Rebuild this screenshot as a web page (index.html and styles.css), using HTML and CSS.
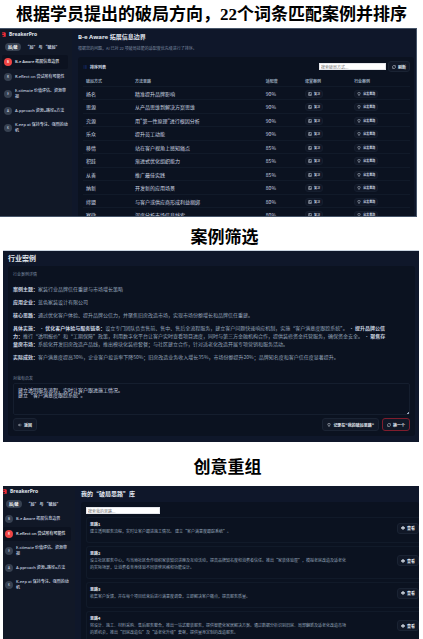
FILE: index.html
```html
<!DOCTYPE html>
<html lang="zh-CN">
<head>
    <meta charset="UTF-8">
    <meta name="viewport" content="width=device-width, initial-scale=1.0">
    <title>BreakerPro</title>
    <link rel="stylesheet" href="styles.css">
</head>
<body>
    <!-- Shared icons -->
    <svg class="sprite" aria-hidden="true">
        <symbol id="i-refresh" viewBox="0 0 24 24"><path d="M3 11a9 9 0 0 1 15-6l3 3M21 3v5h-5M21 13a9 9 0 0 1-15 6l-3-3M3 21v-5h5"/></symbol>
        <symbol id="i-book" viewBox="0 0 24 24"><path d="M4 3h16v18H4zM4 16h16M9 3v8"/></symbol>
        <symbol id="i-bulb" viewBox="0 0 24 24"><path d="M9 17c0-3-4-4-4-9a7 7 0 0 1 14 0c0 5-4 6-4 9zM9 22h6"/></symbol>
        <symbol id="i-back" viewBox="0 0 24 24"><path d="M21 12H4M11 4l-8 8 8 8"/></symbol>
        <symbol id="i-eye" viewBox="0 0 24 24"><path fill="currentColor" d="M1 12q11-17 22 0q-11 17-22 0z"/><circle cx="12" cy="12" r="3" fill="#111827" stroke="none"/></symbol>
        <symbol id="i-list" viewBox="0 0 24 24"><path d="M2 5h3M9 5h13M2 12h3M9 12h13M2 19h3M9 19h13"/></symbol>
        <symbol id="i-logo" viewBox="0 0 20 24"><path fill="#ef2b36" stroke="none" d="M1 1h14l4 4v18H3v-5h7v-3H1v-5h9V7H1z"/></symbol>
    </svg>

    <h1 class="heading">根据学员提出的破局方向，22个词条匹配案例并排序</h1>

    <div class="shot shot-rank">
        <nav class="sidebar">
            <div class="brand"><svg><use href="#i-logo"/></svg>BreakerPro</div>
            <div class="mode"><span class="pill">局/破</span><span>“局” 与 “破局”</span></div>
            <a class="item active" href="#"><span class="dot">B</span><span>B-e Aware 拓展信息边界</span></a>
            <a class="item" href="#"><span class="dot">R</span><span>R-eflect on 尝试所有可能性</span></a>
            <a class="item" href="#"><span class="dot">E</span><span>E-stimate 价值评估、资源审<br>视</span></a>
            <a class="item" href="#"><span class="dot">A</span><span>A-pproach 资源+路径=方法</span></a>
            <a class="item" href="#"><span class="dot">K</span><span>K-eep at 保持专注、强烈的动<br>机</span></a>
        </nav>
        <main class="main">
            <h2 class="title">B-e Aware 拓展信息边界</h2>
            <p class="desc">根据您的问题，AI 已对 22 项破局技能的适配度优先级进行了排序。</p>
            <div class="panel">
                <div class="toolbar">
                    <span class="list-name"><svg><use href="#i-list"/></svg>排序列表</span>
                    <input class="search" type="text" placeholder="搜索破局方式..." aria-label="搜索破局方式">
                    <button class="btn"><svg><use href="#i-refresh"/></svg>刷新</button>
                </div>
                <table class="rank">
                    <thead>
                        <tr><th>破局方式</th><th>方法思路</th><th>适配度</th><th>课堂案例</th><th>行业案例</th></tr>
                    </thead>
                    <tbody>
                        <tr><td>扬名</td><td>精准提升品牌影响</td><td>90%</td><td><button class="tag"><svg><use href="#i-book"/></svg>复习</button></td><td><button class="tag"><svg><use href="#i-bulb"/></svg>启发思路</button></td></tr>
                        <tr><td>思源</td><td>从产品思维到解决方案思维</td><td>90%</td><td><button class="tag"><svg><use href="#i-book"/></svg>复习</button></td><td><button class="tag"><svg><use href="#i-bulb"/></svg>启发思路</button></td></tr>
                        <tr><td>究源</td><td>用"第一性原理"进行根因分析</td><td>90%</td><td><button class="tag"><svg><use href="#i-book"/></svg>复习</button></td><td><button class="tag"><svg><use href="#i-bulb"/></svg>启发思路</button></td></tr>
                        <tr><td>乐众</td><td>提升员工动能</td><td>90%</td><td><button class="tag"><svg><use href="#i-book"/></svg>复习</button></td><td><button class="tag"><svg><use href="#i-bulb"/></svg>启发思路</button></td></tr>
                        <tr><td>移情</td><td>站在客户视角上感知痛点</td><td>85%</td><td><button class="tag"><svg><use href="#i-book"/></svg>复习</button></td><td><button class="tag"><svg><use href="#i-bulb"/></svg>启发思路</button></td></tr>
                        <tr><td>积跬</td><td>渐进式优化组织能力</td><td>85%</td><td><button class="tag"><svg><use href="#i-book"/></svg>复习</button></td><td><button class="tag"><svg><use href="#i-bulb"/></svg>启发思路</button></td></tr>
                        <tr><td>从善</td><td>推广最佳实践</td><td>85%</td><td><button class="tag"><svg><use href="#i-book"/></svg>复习</button></td><td><button class="tag"><svg><use href="#i-bulb"/></svg>启发思路</button></td></tr>
                        <tr><td>纳新</td><td>开发新的应用场景</td><td>80%</td><td><button class="tag"><svg><use href="#i-book"/></svg>复习</button></td><td><button class="tag"><svg><use href="#i-bulb"/></svg>启发思路</button></td></tr>
                        <tr><td>缔盟</td><td>与客户或供应商形成利益捆绑</td><td>80%</td><td><button class="tag"><svg><use href="#i-book"/></svg>复习</button></td><td><button class="tag"><svg><use href="#i-bulb"/></svg>启发思路</button></td></tr>
                        <tr><td>察微</td><td>深度分析市场信息线索</td><td>80%</td><td><button class="tag"><svg><use href="#i-book"/></svg>复习</button></td><td><button class="tag"><svg><use href="#i-bulb"/></svg>启发思路</button></td></tr>
                    </tbody>
                </table>
            </div>
        </main>
    </div>

    <h1 class="heading heading-case">案例筛选</h1>

    <div class="shot shot-case">
        <h2 class="case-title">行业案例</h2>
        <div class="case-panel">
            <p class="label">行业案例详情</p>
            <div class="case-text">
                <p><b>案例主题：</b>家装行业品牌信任重建与市场增长策略</p>
                <p><b>应用企业：</b>蓝色家装设计有限公司</p>
                <p><b>核心思路：</b>通过优化客户体验、提升品牌公信力，并聚焦旧房改造市场，实现市场份额增长和品牌信任重建。</p>
                <p><b>具体实施：</b> · <b>优化客户体验与服务链条：</b>设立专门团队负责售前、售中、售后全流程服务，建立客户问题快速响应机制，实施“客户满意度跟踪系统”。 · <b>提升品牌公信<br>力：</b>推行“透明报价”和“工期保障”政策，利用数字化平台让客户实时查看项目进度，同时与第三方金融机构合作，提供装修资金托管服务，确保资金安全。 · <b>聚焦存<br>量房市场：</b>系统化开发旧房改造产品线，推出模块化装修套餐；与社区建立合作，针对适老化改造开展专项营销和服务活动。</p>
                <p><b>实际成效：</b>客户满意度提高30%，企业客户投诉率下降50%；旧房改造业务收入增长35%，市场份额提升20%；品牌知名度和客户信任度显著提升。</p>
            </div>
            <label class="label" for="note">对我有启发</label>
            <textarea class="note" id="note">建立透明服务流程，实时让客户跟进施工情况。
建立“客户满意度跟踪系统”。</textarea>
            <div class="actions">
                <button class="btn btn-large btn-back"><svg><use href="#i-back"/></svg>返回</button>
                <button class="btn btn-large"><svg><use href="#i-bulb"/></svg>记录在"我的破局思路"</button>
                <button class="btn btn-large btn-red"><svg><use href="#i-refresh"/></svg>换一个</button>
            </div>
        </div>
    </div>

    <h1 class="heading heading-idea">创意重组</h1>

    <div class="shot shot-idea">
        <nav class="sidebar">
            <div class="brand"><svg><use href="#i-logo"/></svg>BreakerPro</div>
            <div class="mode"><span class="pill">局/破</span><span>“局” 与 “破局”</span></div>
            <a class="item" href="#"><span class="dot">B</span><span>B-e Aware 拓展信息边界</span></a>
            <a class="item active" href="#"><span class="dot">R</span><span>R-eflect on 尝试所有可能性</span></a>
            <a class="item" href="#"><span class="dot">E</span><span>E-stimate 价值评估、资源审<br>视</span></a>
            <a class="item" href="#"><span class="dot">A</span><span>A-pproach 资源+路径=方法</span></a>
            <a class="item" href="#"><span class="dot">K</span><span>K-eep at 保持专注、强烈的动<br>机</span></a>
        </nav>
        <div class="main">
            <h2 class="title">我的“破局思路”库</h2>
            <div class="panel">
                <input class="search" type="text" placeholder="搜索我的思路..." aria-label="搜索我的思路">
                <div class="card">
                    <div class="card-text">
                        <h3>思路1</h3>
                        <p>建立透明服务流程，实时让客户跟进施工情况。 建立“客户满意度跟踪系统”。</p>
                    </div>
                    <button class="btn"><svg><use href="#i-eye"/></svg>查看</button>
                </div>
                <div class="card">
                    <div class="card-text">
                        <h3>思路2</h3>
                        <p>设立社区服务中心，与当地社区合作组织家装知识讲座及互动活动，提高品牌知名度和消费者信任。推出“家装体验屋”，模拟老房改造及适老化<br>的实际场景，让消费者亲身体验不同装修风格和功能设计。</p>
                    </div>
                    <button class="btn"><svg><use href="#i-eye"/></svg>查看</button>
                </div>
                <div class="card">
                    <div class="card-text">
                        <h3>思路3</h3>
                        <p>收集客户反馈，并在每个项目结束后进行满意度调查，立即解决客户痛点，提高服务质量。</p>
                    </div>
                    <button class="btn"><svg><use href="#i-eye"/></svg>查看</button>
                </div>
                <div class="card">
                    <div class="card-text">
                        <h3>思路4</h3>
                        <p>将设计、施工、材料采购、售后服务整合，推出一站式整装服务，提供智能化家居解决方案。通过数据分析识别旧房、局部翻新及适老化改造市场<br>的新机会，推出“旧房改造包”及“适老化升级”套餐，提供量身定制的改造服务。</p>
                    </div>
                    <button class="btn"><svg><use href="#i-eye"/></svg>查看</button>
                </div>
            </div>
        </div>
    </div>
</body>
</html>
```
FILE: styles.css
```css
* {
    box-sizing: border-box;
}

body {
    margin: 0;
    height: 100vh;
    display: flex;
    flex-direction: column;
    overflow: hidden;
    background: #fff;
    color: #cbd5e1;
    font-family: "Noto Sans CJK SC", "Noto Sans", sans-serif;
    font-size: 4px;
    line-height: 6px;
}

h1, h2, h3, p {
    margin: 0;
}

button, input, textarea {
    font-family: inherit;
    font-size: 4px;
    line-height: 6px;
}

svg {
    width: 4px;
    height: 4px;
    flex: none;
    fill: none;
    stroke: currentColor;
    stroke-width: 3;
}

.sprite {
    display: none;
}

/* Section headings */
.heading {
    flex: none;
    color: #000;
    text-align: center;
    font-family: "Liberation Serif", "Noto Sans CJK SC", serif;
    font-size: 17px;
    line-height: 26px;
    font-weight: 700;
    padding-top: 2px;
}

.heading-case {
    line-height: 24px;
    padding: 9px 0 0 26px;
}

.heading-idea {
    line-height: 36px;
    padding: 8px 0 0 32px;
}

.shot {
    flex: none;
    display: flex;
    overflow: hidden;
    background: #0f172a;
}

.shot-rank {
    margin-right: 6px;
    aspect-ratio: 417 / 189;
    border: 1px solid #475569;
    border-left: 0;
}

.shot-case {
    margin: 0 4px 0 3px;
    flex-direction: column;
    padding: 2px 4px 6px 5px;
    border-top: 1px solid #cbd5e1;
}

.shot-idea {
    margin: 0 4px 0 3px;
    flex: 1;
}

/* Sidebar */
.sidebar {
    flex: none;
    width: 72px;
    display: flex;
    flex-direction: column;
    gap: 1px;
    padding: 1px 4px 0 2px;
    background: #111827;
}

.brand {
    display: flex;
    align-items: center;
    gap: 3px;
    font-family: "Noto Sans", sans-serif;
    font-size: 5px;
    line-height: 8px;
    font-weight: 700;
    color: #e2e8f0;
}

.brand svg {
    height: 5px;
}

.mode {
    display: flex;
    align-items: center;
    gap: 5px;
    margin: 4px 0 3px;
    padding-left: 3px;
    font-weight: 600;
}

.pill {
    padding: 1px 3px;
    border-radius: 4px;
    background: #374151;
    color: #fff;
}

.item {
    display: flex;
    align-items: center;
    gap: 3px;
    min-height: 14px;
    padding: 3px 2px;
    border-radius: 2px;
    color: #cbd5e1;
    font-family: "Noto Sans", "Noto Sans CJK SC", sans-serif;
    font-weight: 500;
    text-decoration: none;
    white-space: nowrap;
}

.item.active {
    background: #0c1220;
    color: #e2e8f0;
}

.dot {
    flex: none;
    width: 8px;
    height: 8px;
    border-radius: 50%;
    background: #374151;
    font-size: 3px;
    line-height: 8px;
    text-align: center;
}

.active .dot {
    background: #ef4444;
    color: #fff;
}

.shot-idea .sidebar {
    padding-left: 0;
}

/* Main column */
.main {
    flex: 1;
    min-width: 0;
    display: flex;
    flex-direction: column;
    padding: 4px 2px 0 6px;
}

.title {
    font-family: "Noto Sans", "Noto Sans CJK SC", sans-serif;
    font-size: 6px;
    line-height: 8px;
    font-weight: 700;
    color: #e2e8f0;
}

.desc {
    margin-top: 4px;
    color: #7c8aa0;
}

.panel {
    flex: 1;
    margin-top: 6px;
    padding: 4px 4px 0 5px;
    border-radius: 3px 3px 0 0;
    background: #0b1220;
}

.toolbar {
    display: flex;
    align-items: center;
    gap: 2px;
}

.list-name {
    display: flex;
    align-items: center;
    gap: 3px;
    margin-right: auto;
    font-weight: 600;
}

.list-name svg {
    color: #1d3fa8;
}

.search {
    width: 67px;
    height: 7px;
    padding: 0 1px;
    border: 1px solid #e5e7eb;
    background: #fff;
    color: #111827;
}

.search::placeholder {
    color: #757575;
}

.btn, .tag {
    display: flex;
    align-items: center;
    justify-content: center;
    gap: 2px;
    padding: 0 3px;
    border: 1px solid #1a2333;
    border-radius: 3px;
    background: #111827;
    color: #e2e8f0;
    font-weight: 600;
    white-space: nowrap;
}

.btn {
    flex: none;
    height: 11px;
}

.tag {
    height: 8px;
    padding: 0 2px;
    font-size: 3px;
    border-color: #151e2e;
    color: #cbd5e1;
}

/* Ranking table */
.rank {
    width: 100%;
    table-layout: fixed;
    border-collapse: collapse;
    margin-top: 2px;
    font-size: 5px;
}

.rank th, .rank td {
    height: 13px;
    padding: 0 3px;
    text-align: left;
    white-space: nowrap;
    box-shadow: inset 0 -1px #111a29;
}

.rank th {
    font-size: 4px;
    font-weight: 600;
    color: #94a3b8;
}

.rank tr:nth-child(even) td {
    height: 14px;
}

.rank th:nth-child(1) { width: 15%; }
.rank th:nth-child(2) { width: 40%; }
.rank th:nth-child(3) { width: 12%; }
.rank th:nth-child(4) { width: 15%; }
.rank th:nth-child(5) { width: 18%; }

/* Case detail */
.case-title {
    font-size: 7px;
    line-height: 10px;
    color: #e2e8f0;
}

.case-panel {
    display: flex;
    flex-direction: column;
    margin-top: 3px;
    padding: 5px;
    border-radius: 3px;
    background: #0b1220;
}

.label {
    color: #7c8aa0;
}

.case-text {
    display: flex;
    flex-direction: column;
    gap: 5px;
    margin: 8px 0 14px;
    font-size: 5px;
    line-height: 8px;
    color: #94a3b8;
    white-space: nowrap;
}

.case-text b {
    color: #cbd5e1;
}

.note {
    height: 32px;
    margin-top: 2px;
    padding: 3px 4px;
    border: 1px solid #151e2e;
    border-radius: 2px;
    background: #0b1220;
    color: #cbd5e1;
    font-size: 5px;
    line-height: 5px;
}

.note::-webkit-resizer {
    background: linear-gradient(135deg, transparent 50%, #94a3b8 50%) no-repeat right bottom / 3px 3px;
}

.actions {
    display: flex;
    gap: 3px;
    margin-top: 3px;
}

.btn-large {
    height: 13px;
    padding: 0 4px;
}

.btn-back {
    margin-right: auto;
}

.btn-red {
    border-color: #7f1d2d;
}

/* Idea library */
.shot-idea .main {
    padding-right: 0;
}

.shot-idea .title {
    font-family: "Noto Sans CJK SC", sans-serif;
}

.shot-idea .panel {
    margin-top: 4px;
    padding-right: 0;
}

.shot-idea .search {
    display: block;
    width: 74px;
    margin: 1px 0 3px;
}

.card {
    display: flex;
    align-items: center;
    justify-content: space-between;
    margin-bottom: 3px;
    padding: 3px 0 7px 3px;
    border: 1px solid #111a29;
    border-right: 0;
    border-radius: 3px 0 0 3px;
}

.card-text {
    line-height: 7px;
    color: #94a3b8;
    white-space: nowrap;
}

.card-text h3 {
    font-size: 4px;
    color: #e2e8f0;
}
```
